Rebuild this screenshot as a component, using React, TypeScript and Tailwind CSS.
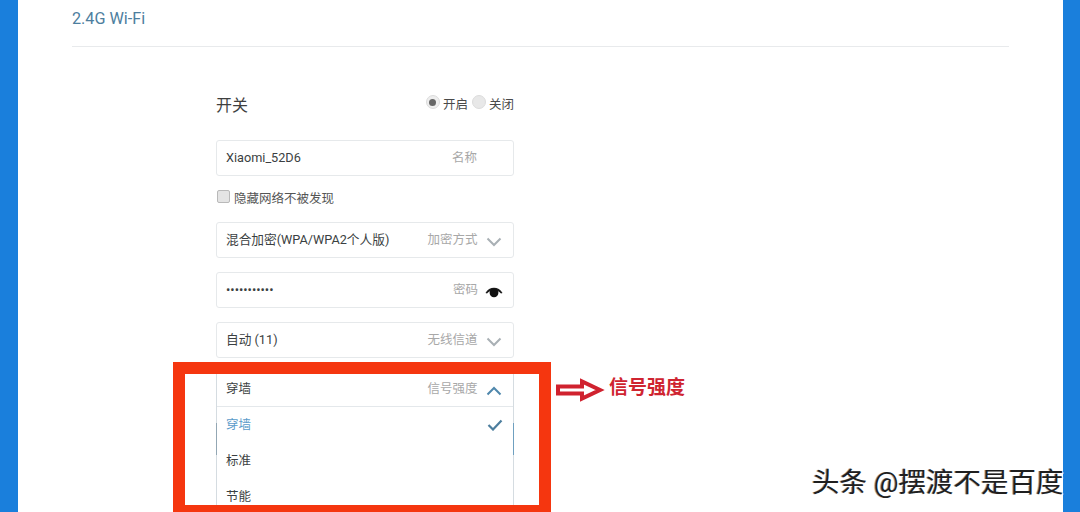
import React from "react";

const cjk = "font-['Roboto','Noto_Sans_CJK_SC',sans-serif]";

function Chevron({ up = false, color = "#a9b0b5" }: { up?: boolean; color?: string }) {
  return (
    <svg width="16" height="10" viewBox="0 0 16 10" fill="none" className="ml-[8px] mr-[1.5px] mt-[3px]">
      <path d={up ? "M1.5 8.5 L8 2 L14.5 8.5" : "M1.5 1.5 L8 8 L14.5 1.5"} stroke={color} strokeWidth="2" />
    </svg>
  );
}

function Field({ value, label, children, valueClass = "text-[12.7px]" }: { value: string; label: string; children?: React.ReactNode; valueClass?: string }) {
  return (
    <div className="flex h-[36px] items-center rounded-[3px] border border-[#e6e9eb] bg-white pl-[9px] pr-[10px]">
      <span className={`text-[#3b3f42] ${valueClass}`}>{value}</span>
      <span className="ml-auto text-[12.5px] text-[#a8a8a8]">{label}</span>
      {children}
    </div>
  );
}

export default function App() {
  return (
    <div className={`relative flex h-[512px] w-[1080px] overflow-hidden bg-white ${cjk}`}>
      <div className="w-[18px] shrink-0 bg-[#1a7fdc]" />
      <div className="flex-1 px-[54px]">
        <div className="flex h-[47px] items-start border-b border-[#e8eaec] pt-[9px] text-[16.2px] leading-[19px] text-[#4d7e9e]">
          2.4G Wi-Fi
        </div>
        <div className="ml-[144px] w-[298px]">
          <div className="flex h-[93px] items-center pt-[25px]">
            <span className="text-[16px] text-[#3f3f3f]">开关</span>
            <div className="ml-auto flex items-center pb-[2px] text-[12.5px] text-[#4a4a4a]">
              <span className="mb-[6px] mr-[3px] flex h-[14px] w-[14px] items-center justify-center rounded-full border border-[#dcdcdc] bg-[#eeeeee]">
                <span className="h-[7px] w-[7px] rounded-full bg-[#666666]" />
              </span>
              <span>开启</span>
              <span className="mb-[6px] ml-[4px] mr-[3px] h-[14px] w-[14px] rounded-full border border-[#dcdcdc] bg-[#e8e8e8]" />
              <span>关闭</span>
            </div>
          </div>
          <Field value="Xiaomi_52D6" label="名称" valueClass="text-[12.7px]">
            <span className="w-[26px]" />
          </Field>
          <div className="flex h-[46px] items-center pt-[1px] text-[12.5px] text-[#555555]">
            <span className="mb-[6px] ml-[1px] mr-[4px] h-[13px] w-[13px] rounded-[2px] border border-[#b9b9b9] bg-[#e4e4e4]" />
            隐藏网络不被发现
          </div>
          <Field value="混合加密(WPA/WPA2个人版)" label="加密方式">
            <Chevron />
          </Field>
          <div className="h-[14px]" />
          <Field value="•••••••••••" label="密码" valueClass="text-[12.8px]">
            <svg width="18" height="12" viewBox="0 0 18 12" className="ml-[7px] mt-[3px]">
              <path d="M0.5 7 C4 0 14 0 17.5 7 L16 7.5 C13 3.4 5 3.4 2 7.5 Z" fill="#1c1c1c" />
              <circle cx="9" cy="6.8" r="4.4" fill="#111111" />
            </svg>
          </Field>
          <div className="h-[14px]" />
          <Field value="自动 (11)" label="无线信道">
            <Chevron />
          </Field>
          <div className="h-[14px]" />
          <div className="border-x border-[#d5dce1]">
            <div className="flex h-[35px] items-center border-b border-[#e4e8eb] pl-[9px] pr-[10px]">
              <span className="text-[12.5px] text-[#3b3f42]">穿墙</span>
              <span className="ml-auto text-[12.5px] text-[#a8a8a8]">信号强度</span>
              <Chevron up color="#4f87ac" />
            </div>
            <div className="flex h-[36px] items-center pl-[9px] pr-[9px] text-[12.5px] text-[#5a9bca]">
              穿墙
              <svg width="16" height="12" viewBox="0 0 16 12" fill="none" className="ml-auto mr-[1px]">
                <path d="M1.5 6 L6 10.5 L14.5 1.5" stroke="#4d7e9e" strokeWidth="2.2" />
              </svg>
            </div>
            <div className="flex h-[36px] items-center pl-[9px] text-[12.5px] text-[#3b3f42]">标准</div>
            <div className="flex h-[36px] items-center pl-[9px] text-[12.5px] text-[#3b3f42]">节能</div>
          </div>
        </div>
      </div>
      <div className="w-[17px] shrink-0 bg-[#1a7fdc]" />

      <span className="absolute left-[216px] top-[423px] h-[32px] w-[1px] bg-[#93a7b4]" />
      <span className="absolute left-[513px] top-[423px] h-[32px] w-[1px] bg-[#6fa0c0]" />
      <div className="pointer-events-none absolute left-[173px] top-[362px] h-[155px] w-[378px] border-[12px] border-[#f5360f]" />
      <svg width="50" height="26" viewBox="0 0 50 26" fill="none" className="absolute left-[555px] top-[377px]">
        <path d="M3 9.5 H27 V4.5 L45 13 L27 21.5 V16.5 H3 Z" fill="white" stroke="#d0222f" strokeWidth="4" />
      </svg>
      <span className="absolute left-[609px] top-[375px] text-[19px] font-bold leading-[26px] text-[#cf2430]">信号强度</span>
      <span className="absolute left-[812px] top-[465px] text-[27.5px] leading-[36px] text-[#1f1f1f] [text-shadow:1px_1px_0_#ffffff,-1px_0_0_#9a9a9a]">
        头条 @摆渡不是百度
      </span>
    </div>
  );
}
